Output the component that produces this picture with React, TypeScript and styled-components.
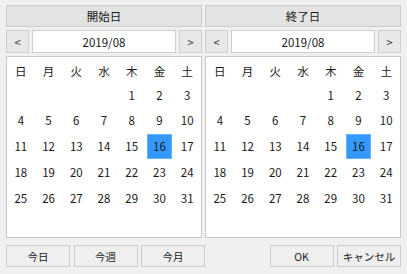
import styled, { createGlobalStyle } from 'styled-components';

const GlobalStyle = createGlobalStyle`
  html, body {
    margin: 0;
    padding: 0;
    background: #f0f0f0;
  }
  body {
    font-family: "Noto Sans CJK JP", "Noto Sans", sans-serif;
    font-size: 12px;
    color: #1a1a1a;
  }
`;

const Window = styled.div`
  width: 407px;
  height: 274px;
  box-sizing: border-box;
  padding: 5px 6px 0 6px;
  display: flex;
  flex-direction: column;
  background: #f0f0f0;
`;

const Columns = styled.div`
  display: grid;
  grid-template-columns: 196px 196px;
  column-gap: 3px;
`;

const Column = styled.div`
  display: flex;
  flex-direction: column;
  gap: 3px;
`;

const Header = styled.div`
  height: 22px;
  box-sizing: border-box;
  border: 1px solid #cdcdcd;
  background: #e3e3e3;
  display: flex;
  align-items: center;
  justify-content: center;
  font-size: 11.5px;
`;

const NavRow = styled.div`
  display: flex;
  height: 23px;
  gap: 3px;
`;

const NavButton = styled.button`
  width: 23px;
  height: 23px;
  padding: 0;
  box-sizing: border-box;
  border: 1px solid #d0d0d0;
  background: #e8e8e8;
  font-family: inherit;
  font-size: 11px;
  color: #333;
  display: flex;
  align-items: center;
  justify-content: center;
`;

const MonthField = styled.div`
  flex: 1;
  box-sizing: border-box;
  border: 1px solid #cdcdcd;
  background: #fff;
  display: flex;
  align-items: center;
  justify-content: center;
  font-size: 11.5px;
`;

const Panel = styled.div`
  height: 182px;
  box-sizing: border-box;
  border: 1px solid #c8c8c8;
  background: #fff;
  padding: 3px 0 0 0;
  display: grid;
  grid-template-columns: repeat(7, 1fr);
  grid-template-rows: 22px repeat(6, 25.8px);
`;

const WeekDay = styled.div`
  display: flex;
  align-items: center;
  justify-content: center;
  font-size: 11.5px;
`;

const Day = styled.div<{ $selected?: boolean }>`
  display: flex;
  align-items: center;
  justify-content: center;
  margin: 0 1px 0.8px 1px;
  font-size: 11.5px;
  box-sizing: border-box;
  background: ${(p) => (p.$selected ? '#3399ff' : 'transparent')};
  border: 1px solid ${(p) => (p.$selected ? '#66b3ff' : 'transparent')};
`;

const Footer = styled.div`
  margin-top: 7px;
  display: flex;
  justify-content: space-between;
`;

const ButtonGroup = styled.div`
  display: flex;
  gap: 3.5px;
`;

const FootButton = styled.button`
  width: 64px;
  height: 22px;
  box-sizing: border-box;
  border: 1px solid #cfcfcf;
  background: #efefef;
  font-family: inherit;
  font-size: 10.5px;
  color: #1a1a1a;
  padding: 0;
`;

const weekDays = ['日', '月', '火', '水', '木', '金', '土'];

function Calendar({ title }: { title: string }) {
  const cells: (number | null)[] = [];
  for (let i = 0; i < 4; i++) cells.push(null);
  for (let d = 1; d <= 31; d++) cells.push(d);
  while (cells.length < 42) cells.push(null);
  return (
    <Column>
      <Header>{title}</Header>
      <NavRow>
        <NavButton>&lt;</NavButton>
        <MonthField>2019/08</MonthField>
        <NavButton>&gt;</NavButton>
      </NavRow>
      <Panel>
        {weekDays.map((w) => (
          <WeekDay key={w}>{w}</WeekDay>
        ))}
        {cells.map((d, i) => (
          <Day key={i} $selected={d === 16}>
            {d ?? ''}
          </Day>
        ))}
      </Panel>
    </Column>
  );
}

export default function App() {
  return (
    <>
      <GlobalStyle />
      <Window>
        <Columns>
          <Calendar title="開始日" />
          <Calendar title="終了日" />
        </Columns>
        <Footer>
          <ButtonGroup>
            <FootButton>今日</FootButton>
            <FootButton>今週</FootButton>
            <FootButton>今月</FootButton>
          </ButtonGroup>
          <ButtonGroup>
            <FootButton>OK</FootButton>
            <FootButton>キャンセル</FootButton>
          </ButtonGroup>
        </Footer>
      </Window>
    </>
  );
}
